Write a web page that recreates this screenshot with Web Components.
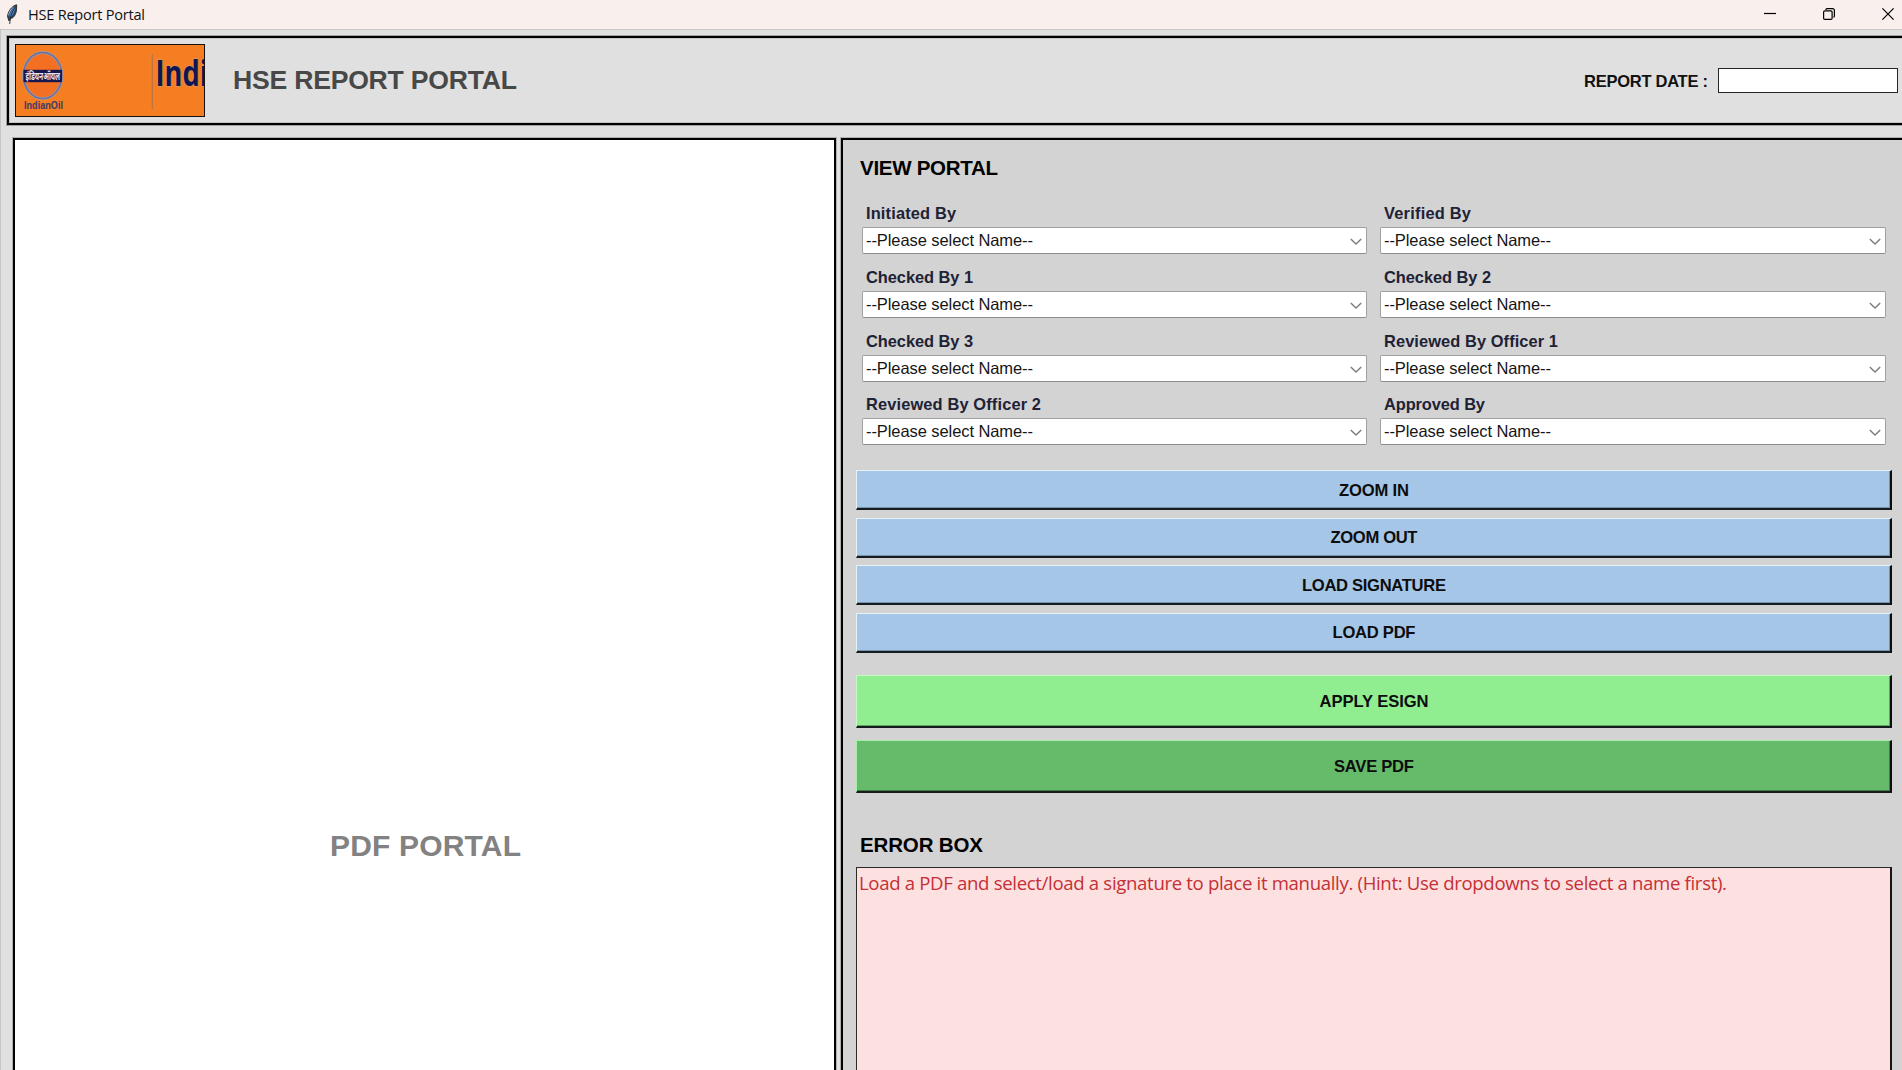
<!DOCTYPE html>
<html lang="en">
<head>
<meta charset="utf-8">
<title>HSE Report Portal</title>
<style>
html,body{margin:0;height:100%;overflow:hidden;background:#e0e0e0;font-family:"Liberation Sans",Arial,sans-serif}
</style>
</head>
<body>
<hse-app></hse-app>
<script>
const define = (name, html, setup) => {
  const t = document.createElement('template');
  t.innerHTML = html;
  customElements.define(name, class extends HTMLElement {
    connectedCallback() {
      if (this.shadowRoot) return;
      this.attachShadow({mode: 'open'}).append(t.content.cloneNode(true));
      if (setup) setup(this, this.shadowRoot);
    }
  });
};

// A single line of text tracked so that it occupies exactly `w` pixels.
define('fit-text', `<style>
:host{display:block;white-space:nowrap;flex:none}
span{display:inline-block;white-space:pre}
</style><span><slot></slot></span>`, (el, root) => {
  const span = root.querySelector('span');
  const fit = () => {
    span.style.letterSpacing = '0px';
    const n = el.textContent.length, w = +el.getAttribute('w');
    const d = (w - span.getBoundingClientRect().width) / (n - 1);
    span.style.letterSpacing = d + 'px';
    span.style.marginRight = -d + 'px';
  };
  fit();
  requestAnimationFrame(fit);
});

define('title-bar', `<style>
:host{display:flex;align-items:center;box-sizing:border-box;height:30px;background:#f9f0ee;border-bottom:1px solid #c9c7c7;color:#111}
.feather{margin:-1px 0 0 6px;width:13px;height:21px}
fit-text{margin:-2px 0 0 9px;font:14.6px/28px "Open Sans","Noto Sans",sans-serif}
.controls{margin:-2px 8px 0 auto;display:flex;gap:47px;align-items:center}
.controls svg{display:block;width:12px;height:12px;fill:none;stroke:#000;stroke-width:1.2}
</style>
<svg class="feather" viewBox="0 0 13 21"><path d="M10.7 .8C6.5 1.5 2 6.800 1.500 12.500L3 17l1.200-2.500C7.500 14.500 9.500 11 10.500 6.500z" fill="#30445c" stroke="#26282d" stroke-width=".9"/><path d="M9.800 2C6.500 4 3.800 9 3.600 13.200 7 12 8.500 8 9.800 2z" fill="#4585cf"/><path d="M9.600 2.500C6.500 7 4.500 11 3.700 20" fill="none" stroke="#1c242e" stroke-width=".9"/><path d="M7.500 3C5 5 3 8.500 2.600 11.500" fill="none" stroke="#b9c7d6" stroke-width=".9"/></svg>
<fit-text w="117">HSE Report Portal</fit-text>
<div class="controls">
<svg viewBox="0 0 12 12"><path d="M0 5.500h12"/></svg>
<svg viewBox="0 0 12 12"><rect x=".6" y="2.900" width="8.500" height="8.500" rx="1.200"/><path d="M3 1.900V1.600Q3 .6 4 .6h5.400q2 0 2 2V8q0 1.100-1.100 1.100"/></svg>
<svg viewBox="0 0 12 12"><path d="M.4.4l11.200 11.200M11.600.4L.4 11.600"/></svg>
</div>`);

define('company-logo', `<style>
:host{display:block;box-sizing:border-box;width:190px;height:73px;border:1px solid #15120f;background:#f57e22;overflow:hidden;flex:none}
svg{display:block}
</style>
<svg width="188" height="71" viewBox="16 45 188 71">
<ellipse cx="42.700" cy="75.600" rx="19.200" ry="23" fill="#f36f21" stroke="#a3989f" stroke-width="3"/>
<ellipse cx="42.700" cy="75.600" rx="19.200" ry="23" fill="none" stroke="#6a6f9c" stroke-width="1.500"/>
<rect x="23.500" y="69.800" width="38.500" height="12.400" fill="#171750"/>
<text x="25.500" y="79.800" textLength="34.500" lengthAdjust="spacingAndGlyphs" font-family="'Noto Sans Devanagari','Noto Sans','Lohit Devanagari',sans-serif" font-size="10.500" font-weight="700" fill="#e6e4ee">इंडियनऑयल</text>
<text x="24" y="109" textLength="39" lengthAdjust="spacingAndGlyphs" font-family="Liberation Sans" font-size="11.500" font-weight="700" fill="#3f3a66">IndianOil</text>
<path d="M152.300 54v55" stroke="#b87345" stroke-width="1.200"/>
<text x="155.500" y="85.500" textLength="52.500" lengthAdjust="spacingAndGlyphs" font-family="Open Sans" font-size="35" font-weight="700" fill="#101652" stroke="#c8a08c" stroke-width=".8" paint-order="stroke">Indi</text>
</svg>`);

define('portal-header', `<style>
:host{display:flex;align-items:center;box-sizing:border-box;height:89px;margin:6px -8px 0 7px;padding:0 10px 0 6px;border:2px solid #000;box-shadow:0 0 0 1px rgba(0,0,0,.28),inset 0 0 0 1px rgba(0,0,0,.12);background:#e0e0e0}
.title{margin:-2px 0 0 28px;font-weight:700;font-size:26.600px;line-height:32px;color:#484848}
.date{margin-left:auto;font-weight:700;font-size:16.500px;line-height:24px;color:#111}
.entry{box-sizing:border-box;width:180px;height:25px;margin-left:10px;border:1px solid #262626;background:#fff;flex:none}
</style>
<company-logo></company-logo>
<fit-text class="title" w="284">HSE REPORT PORTAL</fit-text>
<fit-text class="date" w="124">REPORT DATE :</fit-text>
<div class="entry"></div>`);

define('pdf-view', `<style>
:host{display:block;box-sizing:border-box;width:823px;border:2px solid #000;border-bottom:0;background:#fff;box-shadow:0 0 0 1px rgba(0,0,0,.22);flex:none}
fit-text{margin:688px 0 0 315px;font-weight:700;font-size:30px;line-height:36px;color:#828282}
</style><fit-text w="191">PDF PORTAL</fit-text>`);

define('name-select', `<style>
:host{display:block;height:63.800px}
.label{margin:0 0 0 4px;font-weight:700;font-size:16.400px;line-height:24px;color:#1e2235}
.box{box-sizing:border-box;height:27px;margin-top:2px;padding:0 4px 0 3px;border:1px solid #a0a0a0;border-bottom-color:#8c8c8c;border-radius:2px;background:#fff;display:flex;align-items:center;justify-content:space-between}
.value{font-size:16.500px;line-height:25px;color:#151515}
svg{width:12px;height:7px;margin-top:2px;fill:none;stroke:#7b7b7b;stroke-width:1.400}
</style>
<fit-text class="label"></fit-text>
<div class="box"><fit-text class="value" w="167">--Please select Name--</fit-text><svg viewBox="0 0 12 7"><path d="M.8 1L6 6l5.200-5"/></svg></div>`,
(el, root) => {
  const old = root.querySelector('.label');
  const label = document.createElement('fit-text');
  label.className = 'label';
  label.setAttribute('w', el.getAttribute('w'));
  label.textContent = el.getAttribute('label');
  old.replaceWith(label);
});

define('action-button', `<style>
:host{display:flex;align-items:center;justify-content:center;box-sizing:border-box;height:40px;padding:2px 0 0 1px;background:var(--face,#a5c6e6);border:1px solid var(--light,#e4f4f6);border-right:2px solid #0c0c0c;border-bottom:2px solid #161b20;box-shadow:inset -1px -1px 0 var(--shade,#7594b3);color:#0d0d0d;font-weight:700;font-size:16.600px;line-height:24px}
:host([kind=apply]){--face:#90ee90;--light:#c5fac5;--shade:#5da75d;height:53px}
:host([kind=save]){--face:#66bb6a;--light:#a5f0a6;--shade:#3f8042;height:53px}
</style><slot></slot>`);

define('view-panel', `<style>
:host{display:block;box-sizing:border-box;flex:1;border:2px solid #000;border-right:0;border-bottom:0;background:#d3d3d3;box-shadow:0 0 0 1px rgba(0,0,0,.22);padding:0 10px 0 13px}
.heading{margin-left:4px;font-weight:700;font-size:20.500px;line-height:28px;color:#000}
.grid{display:grid;grid-template-columns:505px 506px;column-gap:13px;margin:19px 0 0 6px}
.group{display:flex;flex-direction:column;gap:7.500px;margin-top:14px}
.final{gap:12px;margin-top:22.500px}
.error-title{margin-top:38px}
.errors{box-sizing:border-box;height:230px;margin-top:8px;border:1px solid #2d2929;border-right:2px solid #161616;background:#fde1e1;padding:5px 2px;color:#c52f35;font:18.600px/20px "Open Sans","Noto Sans",sans-serif}
</style>
<fit-text class="heading" w="138" style="margin-top:14px">VIEW PORTAL</fit-text>
<div class="grid">
<name-select label="Initiated By" w="90"></name-select><name-select label="Verified By" w="87"></name-select>
<name-select label="Checked By 1" w="107"></name-select><name-select label="Checked By 2" w="107"></name-select>
<name-select label="Checked By 3" w="107"></name-select><name-select label="Reviewed By Officer 1" w="174"></name-select>
<name-select label="Reviewed By Officer 2" w="175"></name-select><name-select label="Approved By" w="101"></name-select>
</div>
<div class="group">
<action-button><fit-text w="70">ZOOM IN</fit-text></action-button>
<action-button><fit-text w="87">ZOOM OUT</fit-text></action-button>
<action-button><fit-text w="144">LOAD SIGNATURE</fit-text></action-button>
<action-button><fit-text w="83">LOAD PDF</fit-text></action-button>
</div>
<div class="group final">
<action-button kind="apply"><fit-text w="109">APPLY ESIGN</fit-text></action-button>
<action-button kind="save"><fit-text w="80">SAVE PDF</fit-text></action-button>
</div>
<fit-text class="heading error-title" w="123">ERROR BOX</fit-text>
<div class="errors"><fit-text w="868">Load a PDF and select/load a signature to place it manually. (Hint: Use dropdowns to select a name first).</fit-text></div>`);

define('hse-app', `<style>
:host{display:flex;flex-direction:column;width:1902px;height:1070px;overflow:hidden;background:#e0e0e0;box-shadow:inset 1px 0 #c4c4c4}
.body{display:flex;gap:5px;flex:1;min-height:0;margin:13px 0 0 13px}
</style>
<title-bar></title-bar>
<portal-header></portal-header>
<div class="body"><pdf-view></pdf-view><view-panel></view-panel></div>`);
</script>
</body>
</html>
